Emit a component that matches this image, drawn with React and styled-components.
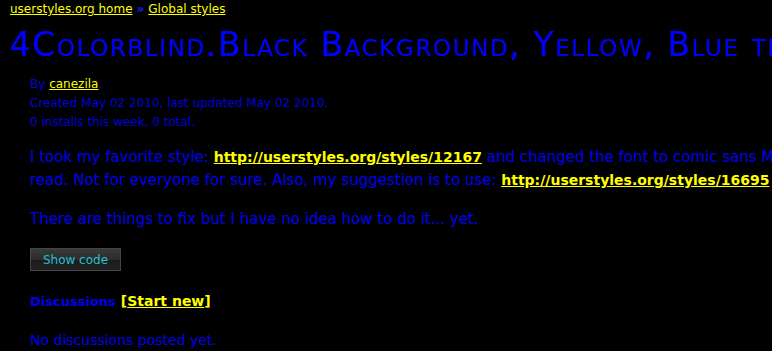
import React from "react";
import styled, { createGlobalStyle } from "styled-components";

const Global = createGlobalStyle`
  html, body {
    margin: 0;
    background: #000;
  }
  body {
    font-family: "Comic Sans MS", "DejaVu Sans", sans-serif;
    color: #0000f0;
    overflow: hidden;
  }
`;

const Page = styled.div`
  width: 1100px;
  padding: 2px 10px 0 10px;
`;

const Crumbs = styled.div`
  font-size: 12px;
  line-height: 15px;
  color: #0000ff;
`;

const YellowLink = styled.a`
  color: #ffff00;
  text-decoration: underline;
`;

const StrongLink = styled(YellowLink)`
  font-weight: bold;
  font-size: 14px;
`;

const Sep = styled.span`
  margin: 0 4px;
  color: #1a1aff;
  font-weight: bold;
`;

const Title = styled.h1`
  margin: 10px 0 0 0;
  font-size: 33px;
  line-height: 36px;
  letter-spacing: 1.6px;
  font-weight: normal;
  font-variant: small-caps;
  color: #0000ff;
  white-space: nowrap;
`;

const Info = styled.div`
  margin: 12px 0 0 20px;
  font-size: 12px;
  line-height: 19px;
  color: #0000dd;
`;

const Description = styled.p`
  margin: 14px 0 0 20px;
  font-size: 15px;
  line-height: 23px;
  white-space: nowrap;
`;

const Note = styled.p`
  margin: 16px 0 0 20px;
  font-size: 15px;
  line-height: 23px;
`;

const CodeButton = styled.button`
  display: block;
  margin: 17px 0 0 20px;
  width: 91px;
  height: 23px;
  padding: 0;
  border: 1px solid #454545;
  background: linear-gradient(#3a3a3a 0%, #2c2c2c 50%, #1c1c1c 51%, #222 100%);
  color: #25c0d2;
  font-family: "DejaVu Sans", sans-serif;
  font-size: 12px;
`;

const Discussions = styled.h3`
  margin: 20px 0 0 20px;
  font-size: 13px;
  line-height: 20px;
  font-weight: bold;
`;

const Bracket = styled.span`
  color: #ffff00;
  margin-left: 5px;
  font-size: 14px;
`;

const Empty = styled.p`
  margin: 18px 0 0 20px;
  font-size: 14px;
  line-height: 20px;
`;

export default function App() {
  return (
    <>
      <Global />
      <Page>
        <Crumbs>
          <YellowLink href="#">userstyles.org home</YellowLink>
          <Sep>»</Sep>
          <YellowLink href="#">Global styles</YellowLink>
        </Crumbs>
        <Title>4Colorblind.Black Background, Yellow, Blue text</Title>
        <Info>
          By <YellowLink href="#">canezila</YellowLink>.
          <br />
          Created May 02 2010, last updated May 02 2010.
          <br />0 installs this week, 0 total.
        </Info>
        <Description>
          I took my favorite style:{" "}
          <StrongLink href="#">http://userstyles.org/styles/12167</StrongLink>{" "}
          and changed the font to comic sans MS and bigger size, it is easier to
          <br />
          read. Not for everyone for sure. Also, my suggestion is to use:{" "}
          <StrongLink href="#">http://userstyles.org/styles/16695</StrongLink>{" "}
          and it will be better.
        </Description>
        <Note>There are things to fix but I have no idea how to do it... yet.</Note>
        <CodeButton>Show code</CodeButton>
        <Discussions>
          Discussions
          <Bracket>
            [<YellowLink href="#">Start new</YellowLink>]
          </Bracket>
        </Discussions>
        <Empty>No discussions posted yet.</Empty>
      </Page>
    </>
  );
}
